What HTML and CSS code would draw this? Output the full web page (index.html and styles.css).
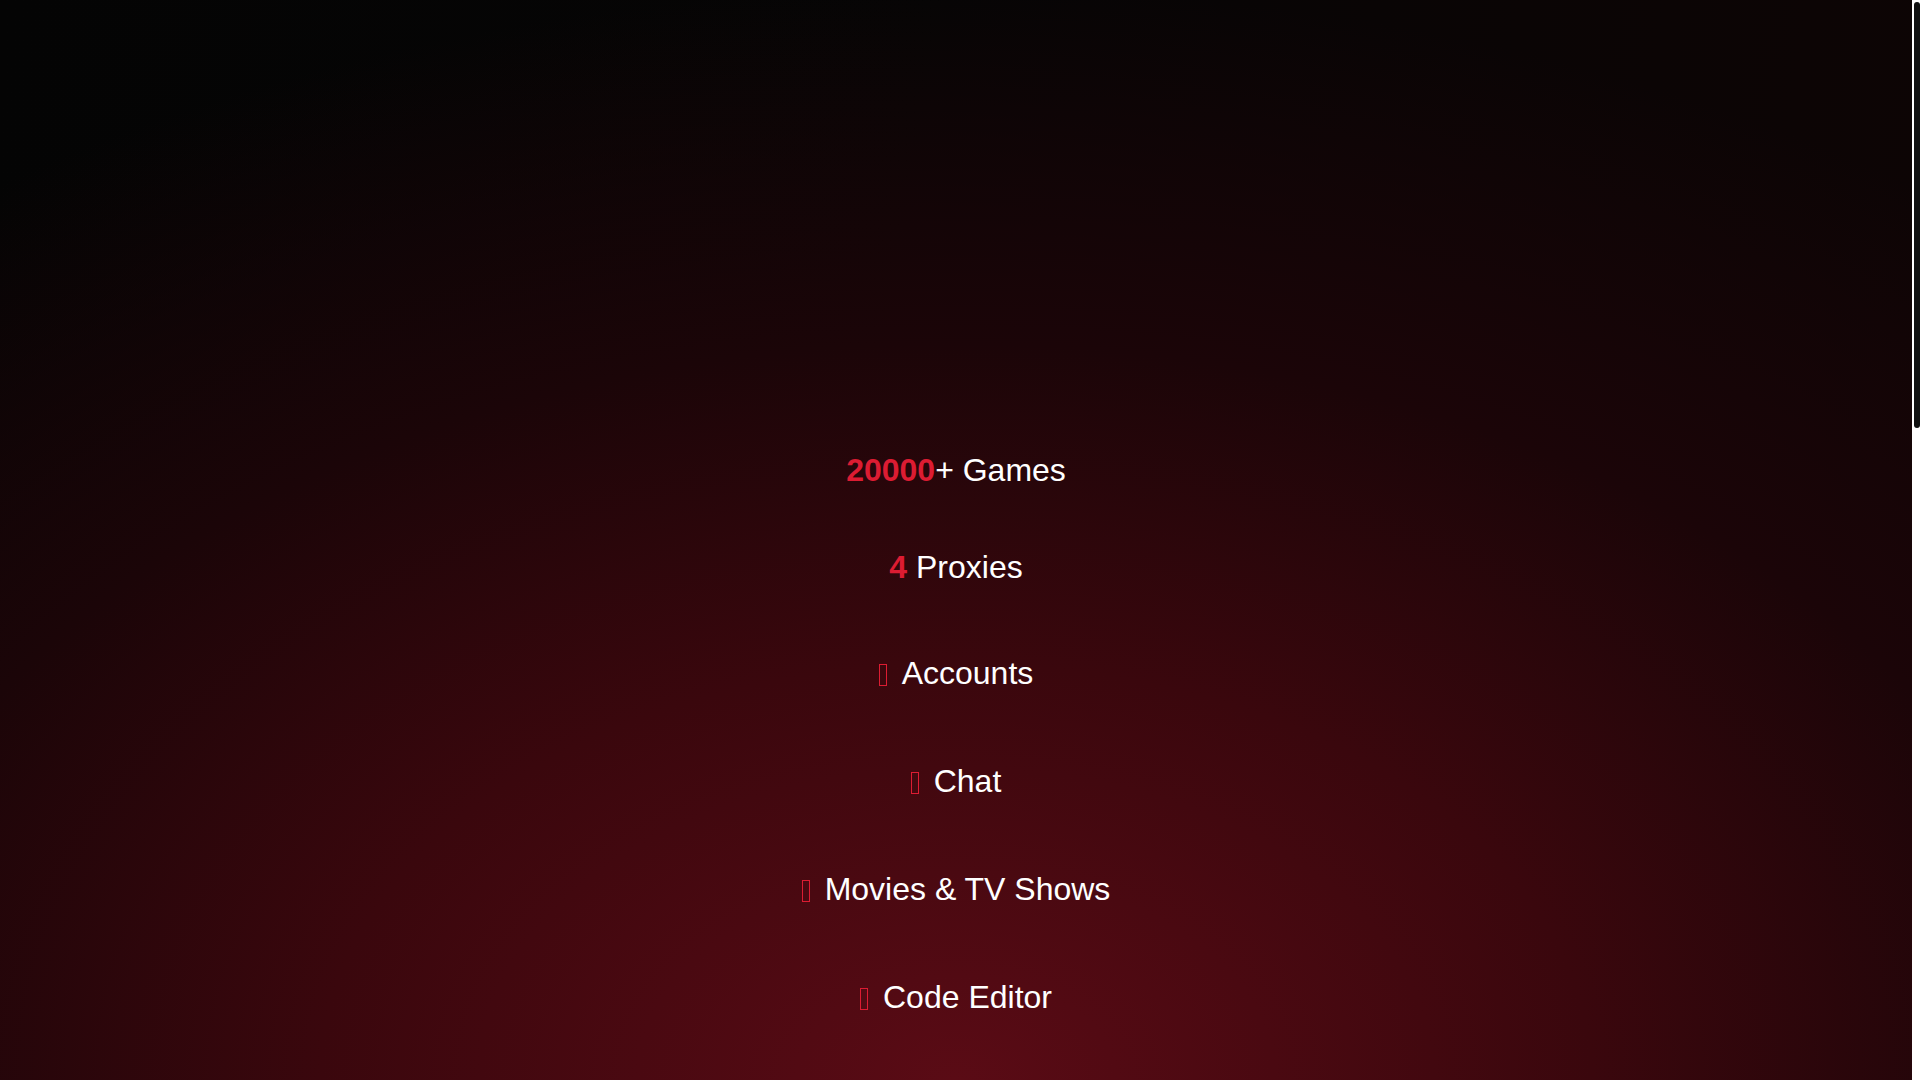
FILE: index.html
```html
<!DOCTYPE html>
<html lang="en">
<head>
<meta charset="utf-8">
<title>Home</title>
<link rel="stylesheet" href="styles.css">
</head>
<body>
<main class="page">
  <section class="hero">
    <div class="stats">
      <h2 class="stat"><span class="accent strong">20000</span>+ Games</h2>
      <h2 class="stat"><span class="accent strong">4</span> Proxies</h2>
    </div>
    <ul class="features">
      <li class="feature"><span class="icon" aria-hidden="true"></span>Accounts</li>
      <li class="feature"><span class="icon" aria-hidden="true"></span>Chat</li>
      <li class="feature"><span class="icon" aria-hidden="true"></span>Movies &amp; TV Shows</li>
      <li class="feature"><span class="icon" aria-hidden="true"></span>Code Editor</li>
    </ul>
  </section>
  <section class="below"></section>
</main>
<div class="scrollbar" aria-hidden="true"><div class="scrollbar-thumb"></div></div>
</body>
</html>
```
FILE: styles.css
```css
html, body {
  margin: 0;
  padding: 0;
}

html::-webkit-scrollbar {
  width: 0;
  height: 0;
}

body {
  background: #050404;
  color: #ffffff;
  font-family: "Liberation Sans", Arial, sans-serif;
  margin-right: 8px;
}

.page {
  display: flex;
  flex-direction: column;
}

.hero {
  height: 1080px;
  box-sizing: border-box;
  padding-top: 452px;
  display: flex;
  flex-direction: column;
  align-items: center;
  background:
    radial-gradient(ellipse 95% 110% at 50% 100%, #5a0b15 0%, #3a070d 35%, #1b0508 62%, rgba(8,4,4,0) 92%),
    linear-gradient(100deg, #040404 0%, #060505 45%, #0e0505 100%);
}

.stats {
  display: flex;
  flex-direction: column;
  align-items: center;
  gap: 60px;
}

.stat {
  margin: 0;
  font-size: 32px;
  font-weight: 400;
  line-height: normal;
}

.accent {
  color: #dc1c32;
}

.strong {
  font-weight: 700;
}

.features {
  list-style: none;
  margin: 69px 0 0 0;
  padding: 0;
  display: flex;
  flex-direction: column;
  align-items: center;
  gap: 71px;
}

.feature {
  font-size: 32px;
  line-height: normal;
  display: flex;
  align-items: center;
}

.icon {
  display: inline-block;
  width: 8px;
  height: 22px;
  box-sizing: border-box;
  border: 1.5px solid #dc1c32;
  margin-right: 15px;
  margin-top: 2px;
}

.below {
  height: 1645px;
  background: linear-gradient(180deg, #570b14 0%, #1a0507 40%, #050404 100%);
}

.scrollbar {
  position: fixed;
  top: 0;
  right: 0;
  width: 8px;
  height: 100vh;
  background: #ffffff;
  display: flex;
  justify-content: flex-end;
}

.scrollbar-thumb {
  width: 6px;
  height: 426px;
  margin-top: 2px;
  background: #111111;
  border-radius: 3px;
}
```
